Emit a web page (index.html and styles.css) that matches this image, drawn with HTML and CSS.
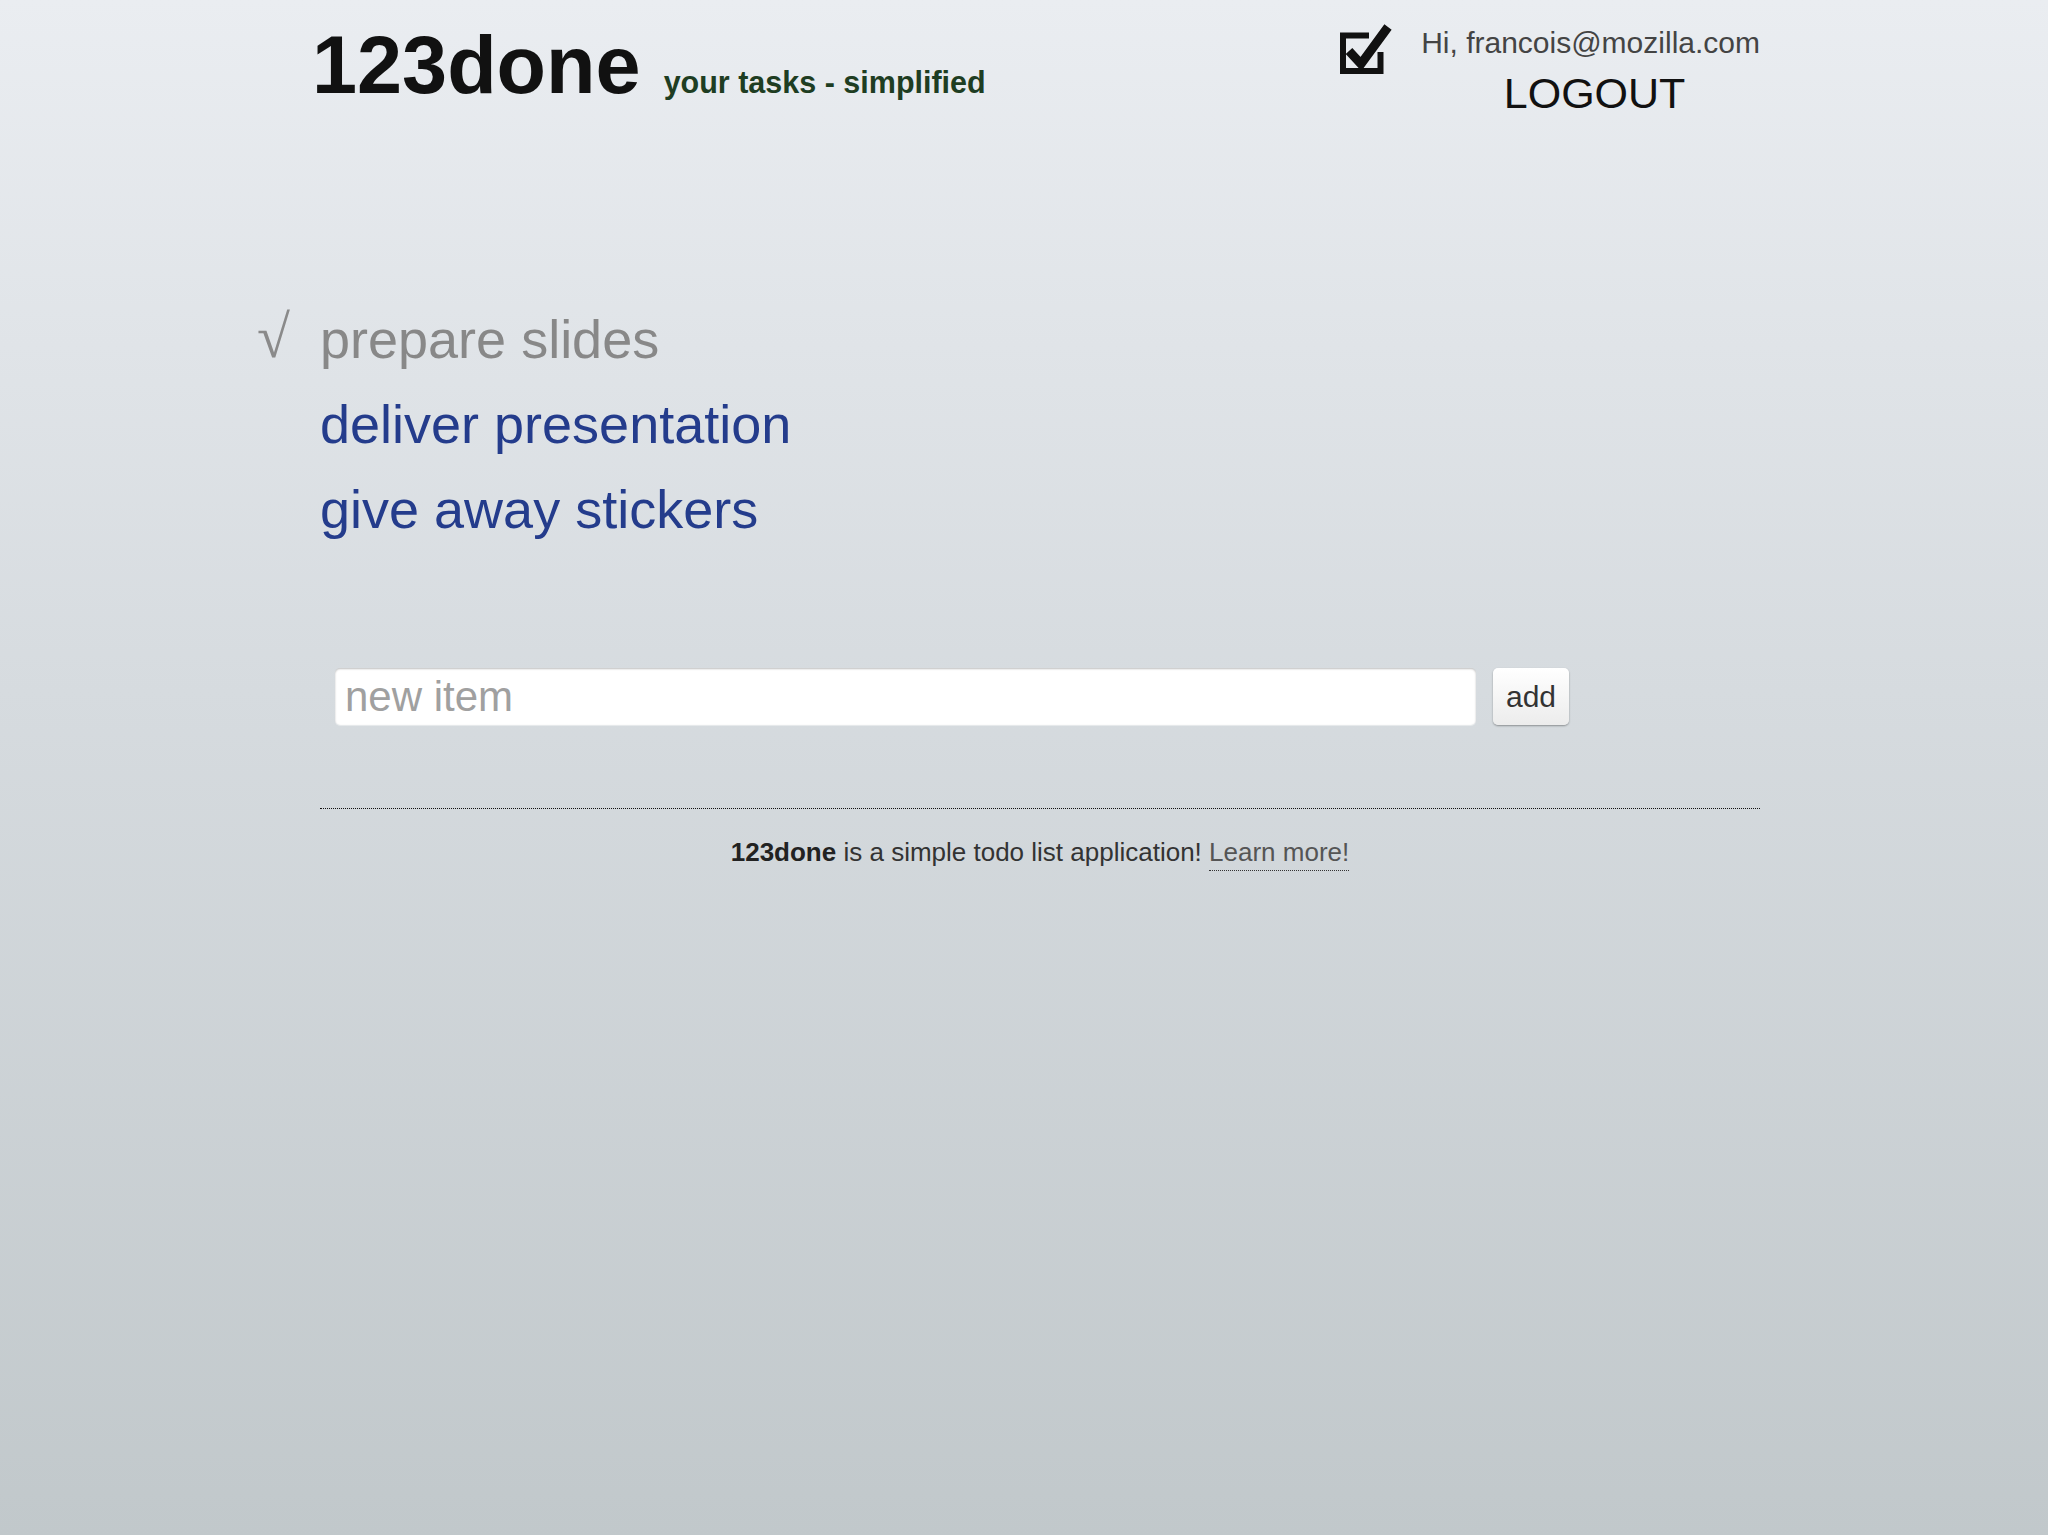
FILE: index.html
```
<!DOCTYPE html>
<html lang="en">
<head>
<meta charset="utf-8">
<title>123done - your tasks, simplified</title>
<link rel="stylesheet" href="styles.css">
</head>
<body>
<div class="page">
  <header class="header">
    <div class="brand">
      <h1 class="logo">123done</h1>
      <span class="tagline">your tasks - simplified</span>
    </div>
    <div class="account">
      <svg class="check-icon" width="52" height="52" viewBox="0 0 52 52" aria-hidden="true">
        <path d="M29 12.5 H3 V48 H40.5 V29" fill="none" stroke="#111" stroke-width="6"/>
        <path d="M9 28 L21 41 L48 4" fill="none" stroke="#111" stroke-width="9" stroke-linejoin="miter"/>
      </svg>
      <div class="user">
        <div class="hi">Hi, francois@mozilla.com</div>
        <a class="logout" href="#">LOGOUT</a>
      </div>
    </div>
  </header>

  <ul class="todos">
    <li class="todo done"><span class="mark">√</span><span class="label">prepare slides</span></li>
    <li class="todo"><span class="mark"></span><span class="label">deliver presentation</span></li>
    <li class="todo"><span class="mark"></span><span class="label">give away stickers</span></li>
  </ul>

  <form class="add-form" onsubmit="return false">
    <input class="new-item" type="text" placeholder="new item">
    <button class="add-btn" type="submit">add</button>
  </form>

  <footer class="footer">
    <p><strong>123done</strong> is a simple todo list application! <a class="learn" href="#">Learn more!</a></p>
  </footer>
</div>
</body>
</html>
```
FILE: styles.css
```
html {
  height: 100%;
  background: linear-gradient(to bottom, #eaedf1 0%, #d6dbdf 45%, #c1c8cb 100%);
}
body {
  margin: 0;
  min-height: 100%;
  font-family: "Liberation Sans", Arial, sans-serif;
  color: #222;
}
.page {
  width: 1440px;
  margin-left: 320px;
}
.header {
  display: flex;
  justify-content: space-between;
  align-items: flex-start;
  height: 130px;
  box-sizing: border-box;
  padding-top: 25px;
}
.brand {
  display: flex;
  align-items: baseline;
  margin-top: 0;
  margin-left: -8px;
}
.logo {
  margin: 0;
  font-size: 81px;
  line-height: 80px;
  font-weight: bold;
  color: #111;
}
.tagline {
  margin-left: 23px;
  font-size: 30.5px;
  font-weight: bold;
  color: #1e3d22;
}
.account {
  display: flex;
  align-items: flex-start;
}
.check-icon {
  display: block;
  margin-top: -2px;
  margin-right: 29px;
}
.user {
  display: flex;
  flex-direction: column;
  align-items: center;
}
.hi {
  font-size: 30px;
  line-height: 36px;
  color: #444;
}
.logout {
  margin-top: 7px;
  margin-left: 8px;
  font-size: 43px;
  line-height: 50px;
  color: #111;
  text-decoration: none;
}
.todos {
  list-style: none;
  margin: 167px 0 0 -63px;
  padding: 0;
}
.todo {
  display: flex;
  font-size: 54px;
  line-height: 85px;
  color: #243c8c;
}
.todo .mark {
  width: 63px;
  flex: none;
  color: #8a8a8a;
  font-family: "Liberation Serif", "Times New Roman", serif;
  font-size: 60px;
  line-height: 80px;
}
.todo.done .label {
  color: #888;
}
.add-form {
  display: flex;
  align-items: stretch;
  gap: 17px;
  margin: 116px 0 0 15px;
}
.new-item {
  width: 1141px;
  height: 57px;
  box-sizing: border-box;
  border: none;
  border-radius: 5px;
  background: #fff;
  box-shadow: inset 0 1px 2px rgba(0, 0, 0, 0.25), 0 1px 0 rgba(255, 255, 255, 0.4);
  padding: 0 10px;
  font-family: "Liberation Sans", Arial, sans-serif;
  font-size: 42px;
  color: #333;
  outline: none;
}
.new-item::placeholder {
  color: #a0a0a0;
}
.add-btn {
  width: 76px;
  height: 57px;
  border: none;
  border-radius: 5px;
  background: linear-gradient(to bottom, #ffffff, #ececec);
  box-shadow: 0 1px 2px rgba(0, 0, 0, 0.35);
  font-family: "Liberation Sans", Arial, sans-serif;
  font-size: 30px;
  color: #333;
  padding: 0;
}
.footer {
  margin-top: 83px;
  border-top: 1px dotted #111;
  padding-top: 28px;
  text-align: center;
}
.footer p {
  margin: 0;
  font-size: 26px;
  line-height: 30px;
  color: #333;
}
.footer strong {
  color: #222;
}
.learn {
  color: #555;
  text-decoration: none;
  border-bottom: 1px dotted #333;
  padding-bottom: 3px;
}
```
